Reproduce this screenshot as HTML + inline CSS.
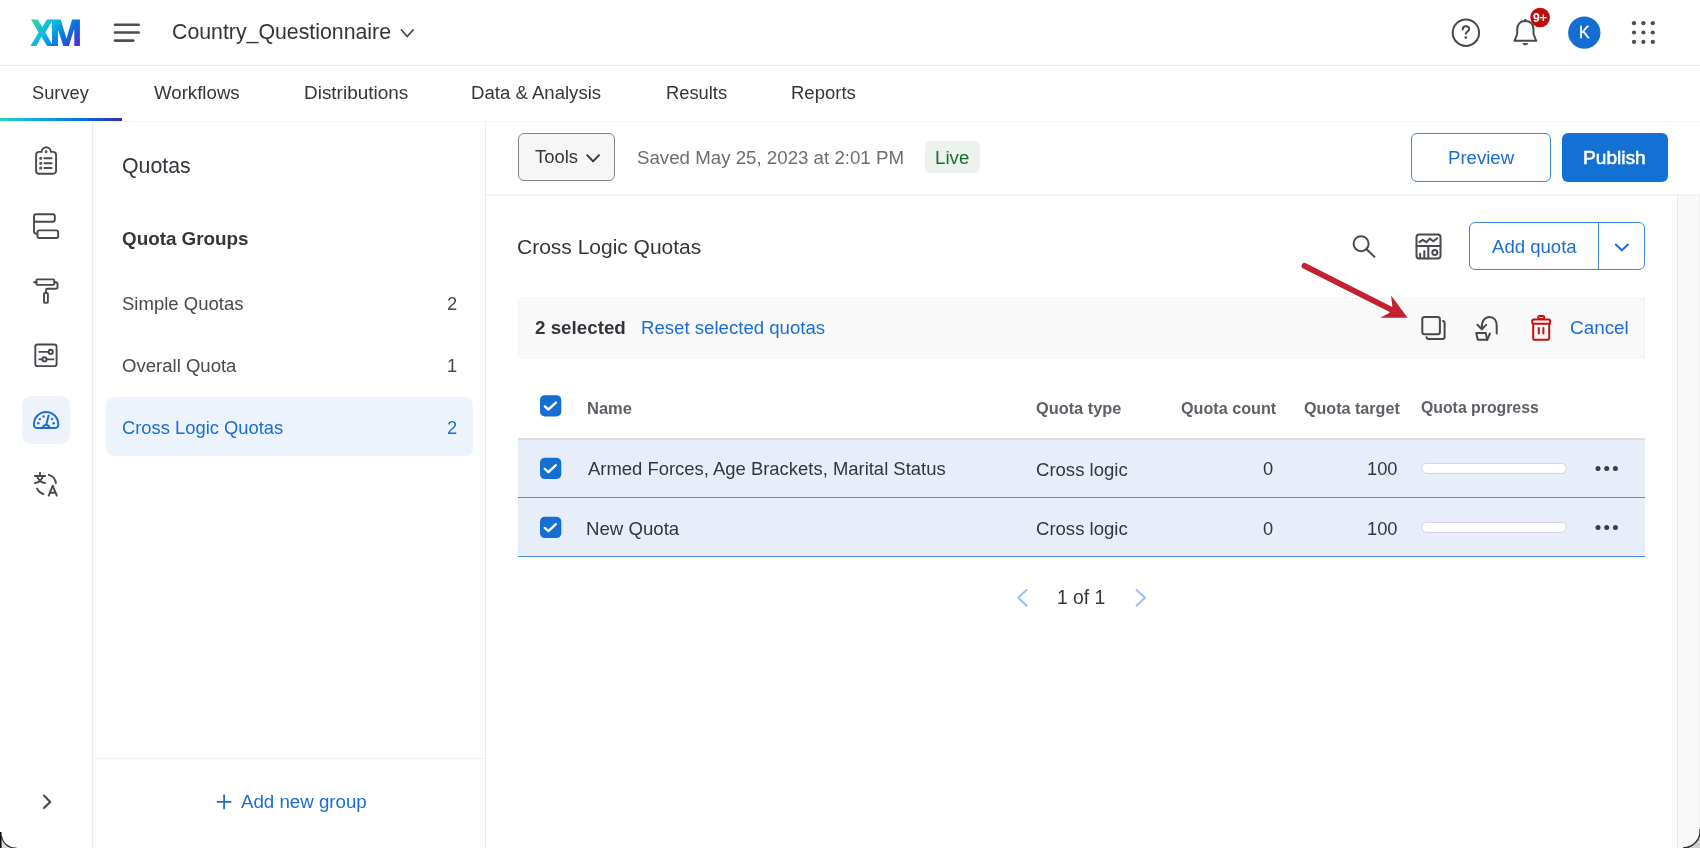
<!DOCTYPE html>
<html><head><meta charset="utf-8"><title>Quotas</title>
<style>
html,body{margin:0;padding:0;}
body{width:1700px;height:848px;overflow:hidden;position:relative;background:#fff;font-family:"Liberation Sans",sans-serif;}
.t{position:absolute;white-space:nowrap;will-change:transform;}
.b{position:absolute;}
.ov{position:absolute;left:0;top:0;}
</style></head><body>

<div class="b" style="left:0;top:65px;width:1700px;height:1px;background:#ededed"></div>
<div class="b" style="left:0;top:121px;width:1700px;height:1px;background:#f2f3f3"></div>
<div class="b" style="left:92px;top:121px;width:1px;height:727px;background:#ececec"></div>
<div class="b" style="left:485px;top:121px;width:1px;height:727px;background:#ececec"></div>
<div class="b" style="left:96px;top:758px;width:388px;height:1px;background:#efefef"></div>
<div class="b" style="left:486px;top:194px;width:1214px;height:2px;background:#f4f4f4"></div>
<div class="b" style="left:1677px;top:196px;width:23px;height:652px;background:#f9f9f9;border-left:1px solid #e9e9e9;border-right:1px solid #f0f0f0;box-sizing:border-box"></div>
<div class="b" style="left:106.3px;top:397px;width:366.7px;height:59px;background:#edf3fc;border-radius:8px"></div>
<div class="b" style="left:518.2px;top:133.2px;width:96.8px;height:48.3px;background:#f6f6f6;border:1.5px solid #808387;border-radius:6px;box-sizing:border-box"></div>
<div class="b" style="left:925px;top:141.4px;width:55px;height:31.7px;background:#ebf3ec;border-radius:5px"></div>
<div class="b" style="left:1411.2px;top:133.2px;width:139.8px;height:48.6px;border:1px solid #3d87e0;border-radius:6px;box-sizing:border-box"></div>
<div class="b" style="left:1561.8px;top:133.2px;width:105.9px;height:48.6px;background:#1271d3;border-radius:6px"></div>
<div class="b" style="left:1469.2px;top:222.3px;width:176.1px;height:48px;border:1px solid #3d87e0;border-radius:6px;box-sizing:border-box"></div>
<div class="b" style="left:1598px;top:222.3px;width:1px;height:48px;background:#3d87e0"></div>
<div class="b" style="left:518.2px;top:297.8px;width:1127px;height:60.1px;background:#f9f9f9;border:1px solid #f1f1f1;box-sizing:border-box"></div>
<div class="b" style="left:518.2px;top:437.5px;width:1127px;height:2px;background:#dddddd"></div>
<div class="b" style="left:518.2px;top:439.5px;width:1127px;height:57.2px;background:#e8eef9"></div>
<div class="b" style="left:518.2px;top:496.7px;width:1127px;height:1.5px;background:#4a90e2"></div>
<div class="b" style="left:518.2px;top:498.2px;width:1127px;height:57.6px;background:#e8eef9"></div>
<div class="b" style="left:518.2px;top:555.8px;width:1127px;height:1.5px;background:#4a90e2"></div>


<svg class="ov" width="1700" height="848" viewBox="0 0 1700 848">
<defs>
<linearGradient id="xmg" gradientUnits="userSpaceOnUse" x1="36" y1="15" x2="74" y2="50">
<stop offset="0" stop-color="#30dc9c"/><stop offset="0.38" stop-color="#08b6e8"/><stop offset="0.7" stop-color="#0a6ddc"/><stop offset="1" stop-color="#5a27e0"/>
</linearGradient>
<linearGradient id="tabg" x1="0" y1="0" x2="1" y2="0">
<stop offset="0" stop-color="#2ed3b7"/><stop offset="0.3" stop-color="#0aa8e6"/><stop offset="0.7" stop-color="#0c6bd8"/><stop offset="1" stop-color="#3a26a8"/>
</linearGradient>
</defs>
<!-- XM logo -->
<polygon fill="url(#xmg)" points="31,19.6 37.6,19.6 42.4,27 46.8,19.6 53,19.6 45.4,32.6 53,45.9 47.2,45.9 41.4,36.8 36.4,45.9 30.4,45.9 38.6,32.6"/>
<polygon fill="url(#xmg)" points="52,19.6 60.7,19.6 66.5,38.8 72.1,19.6 79.9,19.6 79.9,45.9 74.3,45.9 74.3,28.4 68.9,45.9 63.3,45.9 57.9,29.6 57.9,45.9 52,45.9"/>
<!-- hamburger -->
<g stroke="#4a4d52" stroke-width="2.6" stroke-linecap="round">
<line x1="115" y1="24.7" x2="138.7" y2="24.7"/><line x1="115" y1="32.5" x2="138.7" y2="32.5"/><line x1="115" y1="40.6" x2="133.3" y2="40.6"/>
</g>
<!-- title chevron -->
<polyline points="401.5,30 407.2,36.5 413,30" fill="none" stroke="#45494e" stroke-width="1.8" stroke-linecap="round" stroke-linejoin="round"/>
<!-- help -->
<circle cx="1465.9" cy="32.7" r="13.2" fill="none" stroke="#46494e" stroke-width="2"/>
<path d="M1462.7 29.4 C1462.7 27.4 1464.1 26.3 1465.9 26.3 C1467.8 26.3 1469.2 27.5 1469.2 29.2 C1469.2 31.2 1466.1 31.7 1465.8 33.7" fill="none" stroke="#46494e" stroke-width="2" stroke-linecap="round"/>
<circle cx="1465.8" cy="37.6" r="1.3" fill="#46494e"/>
<!-- bell -->
<path d="M1514.5 40.8 L1517.2 34 L1517.2 29.5 C1517.2 24 1520.5 21 1525.3 21 C1530.1 21 1533.5 24 1533.5 29.5 L1533.5 34 L1536.2 40.8 Z" fill="none" stroke="#46494e" stroke-width="2" stroke-linejoin="round"/>
<path d="M1523 43.6 L1527.8 43.6 C1527.8 45.2 1523 45.2 1523 43.6Z" fill="#46494e" stroke="#46494e" stroke-width="1"/>
<circle cx="1525.3" cy="20.3" r="1.3" fill="#46494e"/>
<circle cx="1540.1" cy="17.5" r="9.8" fill="#c00b0b"/>
<!-- avatar -->
<circle cx="1584.3" cy="32.6" r="16.2" fill="#146ed2"/>
<!-- grid -->
<g fill="#4a4d52">
<circle cx="1634" cy="23.2" r="2.1"/><circle cx="1643.4" cy="23.2" r="2.1"/><circle cx="1652.8" cy="23.2" r="2.1"/>
<circle cx="1634" cy="32.5" r="2.1"/><circle cx="1643.4" cy="32.5" r="2.1"/><circle cx="1652.8" cy="32.5" r="2.1"/>
<circle cx="1634" cy="41.9" r="2.1"/><circle cx="1643.4" cy="41.9" r="2.1"/><circle cx="1652.8" cy="41.9" r="2.1"/>
</g>
<!-- tab underline -->
<rect x="0" y="118" width="122" height="3" fill="url(#tabg)"/>

<!-- left rail icons -->
<g fill="none" stroke="#46494e" stroke-width="1.9" stroke-linecap="round" stroke-linejoin="round">
<!-- clipboard -->
<path d="M41.6 151.9 H39.1 A3 3 0 0 0 36.1 154.9 V170.8 A3 3 0 0 0 39.1 173.8 H53.1 A3 3 0 0 0 56.1 170.8 V154.9 A3 3 0 0 0 53.1 151.9 H50.9 A4.6 4.6 0 0 0 41.6 151.9 Z"/>
<line x1="44.3" y1="158.3" x2="51.6" y2="158.3"/><line x1="44.3" y1="163.2" x2="51.6" y2="163.2"/><line x1="44.3" y1="168" x2="51.6" y2="168"/>
<circle cx="40.7" cy="158.3" r="0.6" fill="#46494e"/><circle cx="40.7" cy="163.2" r="0.6" fill="#46494e"/><circle cx="40.7" cy="168" r="0.6" fill="#46494e"/><circle cx="46.1" cy="151.8" r="0.5" fill="#46494e"/>
<!-- blocks -->
<rect x="34" y="214.2" width="20.8" height="7.6" rx="2"/>
<rect x="37.4" y="230.4" width="20.8" height="7.6" rx="2"/>
<path d="M34 221.8 V231.2 A2.6 2.6 0 0 0 36.6 233.8 H37.4"/>
<!-- roller -->
<rect x="36.4" y="279.4" width="17.9" height="5.5" rx="1.2"/>
<path d="M34 282.2 H36.4"/>
<path d="M54.3 282.3 H56 A1.5 1.5 0 0 1 57.5 283.8 V287.3 A1.5 1.5 0 0 1 56 288.8 H47.5 A1.5 1.5 0 0 0 46 290.3 V293"/>
<rect x="44" y="293" width="3.9" height="9.7" rx="1"/>
<!-- sliders -->
<rect x="35.3" y="344.5" width="21.3" height="21.6" rx="2.2"/>
<line x1="39.3" y1="351.9" x2="48.6" y2="351.9"/><circle cx="50.7" cy="351.9" r="2.1"/>
<line x1="39.3" y1="359.4" x2="42.4" y2="359.4"/><circle cx="44.5" cy="359.4" r="2.1"/><line x1="46.6" y1="359.4" x2="53.4" y2="359.4"/>
<!-- translate -->
<line x1="40" y1="472.6" x2="40" y2="474.7"/>
<line x1="34.9" y1="476" x2="45.1" y2="476"/>
<path d="M37.1 476.2 C38.5 480.5 41.5 482.6 45 483"/>
<path d="M42.9 476.2 C41.5 480.5 38.5 482.6 35 483"/>
<path d="M48.8 474.8 C52.5 475.8 55.3 479 55.9 483"/>
<path d="M37 488.6 C38.2 491.2 40.5 493.2 43.5 494.1"/>
<path d="M48.7 495.6 L52.7 485.7 L56.7 495.6"/>
<line x1="50" y1="492.7" x2="55.4" y2="492.7"/>
<!-- bottom chevron -->
<polyline points="44,795.5 50.2,801.9 44,808.1" stroke="#45494e" stroke-width="2.1"/>
</g>
<!-- active gauge bg -->
<rect x="22" y="396" width="48" height="48" rx="9" fill="#edf2fb"/>
<g fill="none" stroke="#1a6fd1" stroke-width="2" stroke-linecap="round" stroke-linejoin="round">
<path d="M36.5 427.9 H55.7 A2.5 2.5 0 0 0 58.2 425.4 V424 A12.1 12.1 0 0 0 34 424 V425.4 A2.5 2.5 0 0 0 36.5 427.9 Z"/>
<path d="M42.8 427.5 A3.4 3.4 0 0 1 49.4 427.5"/>
<line x1="46.3" y1="424.6" x2="48.6" y2="415.6"/>
</g>
<g fill="#1a6fd1">
<circle cx="43.6" cy="416.5" r="1.2"/><circle cx="39.8" cy="419.1" r="1.2"/><circle cx="38.3" cy="423.2" r="1.2"/><circle cx="52.1" cy="419.1" r="1.2"/><circle cx="53.6" cy="423.2" r="1.2"/>
</g>

<!-- tools chevron -->
<polyline points="587.2,155.2 593.1,161.3 599,155.2" fill="none" stroke="#32363a" stroke-width="1.9" stroke-linecap="round" stroke-linejoin="round"/>

<!-- search -->
<circle cx="1361.1" cy="243.7" r="7.5" fill="none" stroke="#46494e" stroke-width="2"/>
<line x1="1366.6" y1="249.3" x2="1374.4" y2="256.8" stroke="#46494e" stroke-width="2" stroke-linecap="round"/>
<!-- dashboard -->
<g fill="none" stroke="#46494e" stroke-width="2" stroke-linecap="round" stroke-linejoin="round">
<rect x="1416.5" y="234.4" width="24" height="24" rx="2.6"/>
<line x1="1416.5" y1="246" x2="1440.5" y2="246"/>
<line x1="1428.3" y1="246" x2="1428.3" y2="258.4"/>
<polyline points="1419.4,242.2 1422.8,239.9 1426.4,242.2 1429.8,238.6 1433.3,241.2 1437.2,238.2"/>
<line x1="1420.2" y1="253.8" x2="1420.2" y2="258"/>
<line x1="1424.3" y1="251.2" x2="1424.3" y2="258"/>
<circle cx="1434.8" cy="252.4" r="2.5"/>
</g>
<!-- add quota chevron -->
<polyline points="1615.8,244.6 1621.9,250.3 1628,244.6" fill="none" stroke="#1a6ed0" stroke-width="2" stroke-linecap="round" stroke-linejoin="round"/>

<!-- copy -->
<g fill="none" stroke="#46494e" stroke-width="2" stroke-linecap="round" stroke-linejoin="round">
<rect x="1422.3" y="317.1" width="17.6" height="17.2" rx="2.2"/>
<path d="M1443 320.9 A1.8 1.8 0 0 1 1444.6 322.7 V336.9 A2 2 0 0 1 1442.6 338.9 H1428.4 A1.9 1.9 0 0 1 1426.5 337.2"/>
<!-- restore -->
<path d="M1481.8 328.6 C1481.4 321.2 1484.6 316.9 1489.4 316.9 C1494 316.9 1496.7 320.6 1496.7 326 V333.4"/>
<polyline points="1477.4,324.8 1481.8,329.2 1486.2,324.9"/>
<path d="M1476.2 333 H1485.8 L1487.2 339.8 H1477.8 Z"/>
<line x1="1487.2" y1="339.8" x2="1489.9" y2="333.6"/>
</g>
<!-- trash -->
<g fill="none" stroke="#c40f15" stroke-width="2" stroke-linecap="round" stroke-linejoin="round">
<rect x="1538.3" y="316" width="5.8" height="3" rx="1"/>
<rect x="1532.2" y="319.6" width="18" height="4.2" rx="1.5"/>
<path d="M1533.2 323.8 V338.2 A1.6 1.6 0 0 0 1534.8 339.8 H1547.6 A1.6 1.6 0 0 0 1549.2 338.2 V323.8"/>
<line x1="1538.8" y1="328" x2="1538.8" y2="333.6"/>
<line x1="1543.4" y1="328" x2="1543.4" y2="333.6"/>
</g>
<!-- arrow -->
<line x1="1304.5" y1="265.8" x2="1392" y2="310" stroke="#c2222f" stroke-width="5.8" stroke-linecap="round"/>
<polygon points="1407.6,317.7 1391.1,295.6 1392.4,307.2 1389.2,313 1380.2,317.7" fill="#c2222f"/>

<!-- checkboxes -->
<g>
<rect x="540" y="395.2" width="21.3" height="21.3" rx="4.8" fill="#156fd2"/>
<rect x="540" y="457.8" width="21.3" height="21.3" rx="4.8" fill="#156fd2"/>
<rect x="540" y="516.8" width="21.3" height="21.3" rx="4.8" fill="#156fd2"/>
</g>
<g fill="none" stroke="#fff" stroke-width="2.4" stroke-linecap="round" stroke-linejoin="round">
<polyline points="544.8,406.3 548.4,409.5 555.9,402.6"/>
<polyline points="544.8,468.9 548.4,472.1 555.9,465.2"/>
<polyline points="544.8,527.9 548.4,531.1 555.9,524.2"/>
</g>
<!-- progress bars -->
<rect x="1421.8" y="463.4" width="144.5" height="10" rx="5" fill="#fff" stroke="#cfd2d6" stroke-width="1"/>
<rect x="1421.8" y="522.4" width="144.5" height="10" rx="5" fill="#fff" stroke="#cfd2d6" stroke-width="1"/>
<!-- dots -->
<g fill="#3c3f43">
<circle cx="1598" cy="468.4" r="2.5"/><circle cx="1606.7" cy="468.4" r="2.5"/><circle cx="1615.4" cy="468.4" r="2.5"/>
<circle cx="1598" cy="527.4" r="2.5"/><circle cx="1606.7" cy="527.4" r="2.5"/><circle cx="1615.4" cy="527.4" r="2.5"/>
</g>
<!-- pagination chevrons -->
<polyline points="1026.5,590 1018.2,597.8 1026.5,605.6" fill="none" stroke="#9ec2ee" stroke-width="2.2" stroke-linecap="round" stroke-linejoin="round"/>
<polyline points="1136.6,590 1145,597.8 1136.6,605.6" fill="none" stroke="#9ec2ee" stroke-width="2.2" stroke-linecap="round" stroke-linejoin="round"/>
<!-- window corners -->
<path d="M0 832 L1.5 832 L1.5 836 A14 14 0 0 0 16.5 848 L0 848 Z" fill="#d6d6d6"/>
<path d="M1.5 836 A14 14 0 0 0 16.5 848" fill="none" stroke="#2a2a2a" stroke-width="1.2"/>
<rect x="0" y="832" width="1.5" height="16" fill="#0a0a14"/>
<path d="M1700 829 A17 17 0 0 1 1683 848 L1700 848 Z" fill="#cfcfcf"/>
<path d="M1700 829 A17 17 0 0 1 1683 848" fill="none" stroke="#2a2a2a" stroke-width="1.4"/>
<!-- plus -->
<g stroke="#1a6ed0" stroke-width="1.8" stroke-linecap="round">
<line x1="217.5" y1="801.8" x2="230.7" y2="801.8"/><line x1="224.1" y1="795.2" x2="224.1" y2="808.4"/>
</g>
</svg>

<div class="t" style="left:171.94px;top:20.42px;font-size:21.30px;line-height:25px;font-weight:normal;color:#32363a;">Country_Questionnaire</div>
<div class="t" style="left:32.38px;top:81.97px;font-size:18.27px;line-height:22px;font-weight:normal;color:#32363a;">Survey</div>
<div class="t" style="left:154.31px;top:81.33px;font-size:18.66px;line-height:23px;font-weight:normal;color:#32363a;">Workflows</div>
<div class="t" style="left:303.68px;top:81.23px;font-size:18.94px;line-height:23px;font-weight:normal;color:#32363a;">Distributions</div>
<div class="t" style="left:471.01px;top:81.36px;font-size:18.58px;line-height:23px;font-weight:normal;color:#32363a;">Data &amp; Analysis</div>
<div class="t" style="left:665.53px;top:81.95px;font-size:18.32px;line-height:22px;font-weight:normal;color:#32363a;">Results</div>
<div class="t" style="left:790.92px;top:81.38px;font-size:18.52px;line-height:23px;font-weight:normal;color:#32363a;">Reports</div>
<div class="t" style="left:121.64px;top:153.81px;font-size:21.30px;line-height:25px;font-weight:normal;color:#32363a;">Quotas</div>
<div class="t" style="left:121.85px;top:226.67px;font-size:18.83px;line-height:23px;font-weight:bold;color:#32363a;">Quota Groups</div>
<div class="t" style="left:122.27px;top:292.28px;font-size:18.52px;line-height:23px;font-weight:normal;color:#45494e;">Simple Quotas</div>
<div class="t" style="left:447.06px;top:292.86px;font-size:18.30px;line-height:22px;font-weight:normal;color:#45494e;">2</div>
<div class="t" style="left:122.16px;top:353.96px;font-size:18.56px;line-height:23px;font-weight:normal;color:#45494e;">Overall Quota</div>
<div class="t" style="left:446.97px;top:354.56px;font-size:18.30px;line-height:22px;font-weight:normal;color:#45494e;">1</div>
<div class="t" style="left:122.08px;top:416.84px;font-size:18.36px;line-height:22px;font-weight:normal;color:#1a6ed0;">Cross Logic Quotas</div>
<div class="t" style="left:447.06px;top:416.86px;font-size:18.30px;line-height:22px;font-weight:normal;color:#1a6ed0;">2</div>
<div class="t" style="left:240.60px;top:790.02px;font-size:18.70px;line-height:23px;font-weight:normal;color:#1a6ed0;">Add new group</div>
<div class="t" style="left:534.63px;top:146.41px;font-size:18.42px;line-height:22px;font-weight:normal;color:#32363a;">Tools</div>
<div class="t" style="left:636.56px;top:145.62px;font-size:18.69px;line-height:23px;font-weight:normal;color:#6a6d71;">Saved May 25, 2023 at 2:01 PM</div>
<div class="t" style="left:934.50px;top:145.61px;font-size:18.71px;line-height:23px;font-weight:normal;color:#1d6b32;">Live</div>
<div class="t" style="left:1447.51px;top:146.05px;font-size:18.59px;line-height:23px;font-weight:normal;color:#1a6ed0;">Preview</div>
<div class="t" style="left:1583.27px;top:145.86px;font-size:19.14px;line-height:23px;font-weight:normal;color:#ffffff;-webkit-text-stroke:0.55px #fff;">Publish</div>
<div class="t" style="left:516.85px;top:233.82px;font-size:20.99px;line-height:25px;font-weight:normal;color:#32363a;">Cross Logic Quotas</div>
<div class="t" style="left:1491.50px;top:234.96px;font-size:18.57px;line-height:23px;font-weight:normal;color:#1a6ed0;">Add quota</div>
<div class="t" style="left:534.54px;top:315.68px;font-size:18.80px;line-height:23px;font-weight:bold;color:#32363a;">2 selected</div>
<div class="t" style="left:640.51px;top:315.75px;font-size:18.61px;line-height:23px;font-weight:normal;color:#1a6ed0;">Reset selected quotas</div>
<div class="t" style="left:1570.26px;top:316.35px;font-size:18.90px;line-height:23px;font-weight:normal;color:#1a6ed0;">Cancel</div>
<div class="t" style="left:587.43px;top:397.57px;font-size:16.53px;line-height:21px;font-weight:bold;color:#5d6166;">Name</div>
<div class="t" style="left:1036.15px;top:398.14px;font-size:16.33px;line-height:20px;font-weight:bold;color:#5d6166;">Quota type</div>
<div class="t" style="left:1181.15px;top:398.20px;font-size:16.16px;line-height:20px;font-weight:bold;color:#5d6166;">Quota count</div>
<div class="t" style="left:1304.15px;top:398.21px;font-size:16.13px;line-height:20px;font-weight:bold;color:#5d6166;">Quota target</div>
<div class="t" style="left:1421.07px;top:398.32px;font-size:15.82px;line-height:20px;font-weight:bold;color:#5d6166;">Quota progress</div>
<div class="t" style="left:587.80px;top:458.11px;font-size:18.44px;line-height:22px;font-weight:normal;color:#32363a;">Armed Forces, Age Brackets, Marital Status</div>
<div class="t" style="left:1035.87px;top:457.57px;font-size:18.54px;line-height:23px;font-weight:normal;color:#32363a;">Cross logic</div>
<div class="t" style="left:1263.28px;top:458.16px;font-size:18.30px;line-height:22px;font-weight:normal;color:#32363a;">0</div>
<div class="t" style="left:1366.67px;top:458.16px;font-size:18.30px;line-height:22px;font-weight:normal;color:#32363a;">100</div>
<div class="t" style="left:586.31px;top:517.04px;font-size:18.64px;line-height:23px;font-weight:normal;color:#32363a;">New Quota</div>
<div class="t" style="left:1035.87px;top:517.07px;font-size:18.54px;line-height:23px;font-weight:normal;color:#32363a;">Cross logic</div>
<div class="t" style="left:1263.28px;top:517.66px;font-size:18.30px;line-height:22px;font-weight:normal;color:#32363a;">0</div>
<div class="t" style="left:1366.67px;top:517.66px;font-size:18.30px;line-height:22px;font-weight:normal;color:#32363a;">100</div>
<div class="t" style="left:1057.25px;top:586.00px;font-size:19.33px;line-height:23px;font-weight:normal;color:#32363a;">1 of 1</div>
<div class="t" style="left:1533.07px;top:10.34px;font-size:12.30px;line-height:16px;font-weight:bold;color:#fff;">9+</div>
<div class="t" style="left:1579.04px;top:22.62px;font-size:15.80px;line-height:20px;font-weight:normal;color:#fff;-webkit-text-stroke:0.35px #fff;">K</div>
</body></html>
